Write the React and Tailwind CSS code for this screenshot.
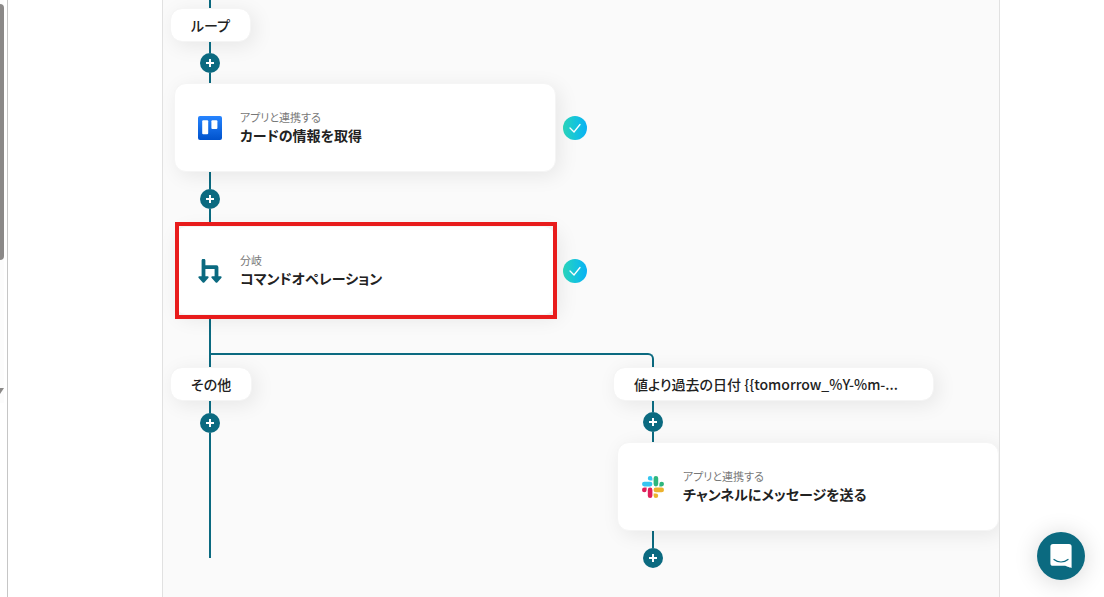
import React from 'react';

const TrelloIcon = () => (
  <svg className="h-6 w-6" viewBox="0 0 24 24" aria-hidden="true">
    <defs>
      <linearGradient id="trello" x1="0" y1="0" x2="0" y2="1">
        <stop offset="0" stopColor="#2684ff" />
        <stop offset="1" stopColor="#0052cc" />
      </linearGradient>
    </defs>
    <rect width="24" height="24" rx="2" fill="url(#trello)" />
    <rect x="4.2" y="4.3" width="6" height="14" rx="1" fill="#fff" />
    <rect x="13.4" y="4.3" width="6" height="8.6" rx="1" fill="#fff" />
  </svg>
);

const BranchIcon = () => (
  <svg className="h-6 w-6" viewBox="0 0 24 24" aria-hidden="true">
    <path
      d="M5.5 1.600v18M5.5 8.200h13V19"
      fill="none"
      stroke="#0b6a80"
      strokeWidth="3.8"
      strokeLinecap="round"
      strokeLinejoin="round"
    />
    <path
      d="M1.4 17.3h8.2c1 0 1.4 1 .7 1.7l-4 4.4c-.5.5-1.1.5-1.6 0L.7 19c-.7-.7-.3-1.7.7-1.7zM14.4 17.3h8.2c1 0 1.4 1 .7 1.7l-4 4.4c-.5.5-1.1.5-1.6 0l-4-4.4c-.7-.7-.3-1.7.7-1.7z"
      fill="#0b6a80"
    />
  </svg>
);

const SlackIcon = () => (
  <svg className="h-[22px] w-[22px]" viewBox="0 0 24 24" aria-hidden="true">
    <path
      fill="#e01e5a"
      d="M5.042 15.165a2.528 2.528 0 0 1-2.52 2.523A2.528 2.528 0 0 1 0 15.165a2.527 2.527 0 0 1 2.522-2.52h2.52v2.52zM6.313 15.165a2.527 2.527 0 0 1 2.521-2.52 2.527 2.527 0 0 1 2.521 2.52v6.313A2.528 2.528 0 0 1 8.834 24a2.528 2.528 0 0 1-2.521-2.522v-6.313z"
    />
    <path
      fill="#36c5f0"
      d="M8.834 5.042a2.528 2.528 0 0 1-2.521-2.52A2.528 2.528 0 0 1 8.834 0a2.528 2.528 0 0 1 2.521 2.522v2.52H8.834zM8.834 6.313a2.528 2.528 0 0 1 2.521 2.521 2.528 2.528 0 0 1-2.521 2.521H2.522A2.528 2.528 0 0 1 0 8.834a2.528 2.528 0 0 1 2.522-2.521h6.312z"
    />
    <path
      fill="#2eb67d"
      d="M18.956 8.834a2.528 2.528 0 0 1 2.522-2.521A2.528 2.528 0 0 1 24 8.834a2.528 2.528 0 0 1-2.522 2.521h-2.522V8.834zM17.688 8.834a2.528 2.528 0 0 1-2.523 2.521 2.527 2.527 0 0 1-2.52-2.521V2.522A2.527 2.527 0 0 1 15.165 0a2.528 2.528 0 0 1 2.523 2.522v6.312z"
    />
    <path
      fill="#ecb22e"
      d="M15.165 18.956a2.528 2.528 0 0 1 2.523 2.522A2.528 2.528 0 0 1 15.165 24a2.527 2.527 0 0 1-2.52-2.522v-2.522h2.52zM15.165 17.688a2.527 2.527 0 0 1-2.52-2.523 2.526 2.526 0 0 1 2.52-2.52h6.313A2.527 2.527 0 0 1 24 15.165a2.528 2.528 0 0 1-2.522 2.523h-6.313z"
    />
  </svg>
);

// Vertical line between two steps
const Line = ({ className }) => (
  <div className="flex w-20 justify-center">
    <div className={`w-0.5 bg-[#0b6a80] ${className}`}></div>
  </div>
);

const AddButton = () => (
  <div className="flex w-20 justify-center">
    <button
      type="button"
      aria-label="追加"
      className="flex h-5 w-5 items-center justify-center rounded-full bg-[#0b6a80]"
    >
      <svg className="h-2 w-2" viewBox="0 0 8 8" aria-hidden="true">
        <path d="M4 0v8M0 4h8" stroke="#fff" strokeWidth="2" />
      </svg>
    </button>
  </div>
);

const Pill = ({ className = '', children }) => (
  <div
    className={`h-[34px] rounded-xl border border-[#f5f5f5] bg-white bg-clip-padding px-5 text-sm leading-8 font-medium whitespace-nowrap shadow-[4px_4px_20px_rgba(0,0,0,0.08)] ${className}`}
  >
    {children}
  </div>
);

const CheckBadge = () => (
  <div className="flex h-6 w-6 items-center justify-center rounded-full bg-linear-to-r from-[#2cd9bd] to-[#0bb0f4]">
    <svg className="h-3 w-3" viewBox="0 0 12 12" aria-hidden="true">
      <path d="M1 6l4 4 6-7.500" fill="none" stroke="#fff" strokeWidth="1.3" strokeLinecap="round" />
    </svg>
  </div>
);

const StepCard = ({ icon, label, title, checked, highlighted }) => (
  <div className="ml-1 flex items-center gap-[7px]">
    <div className="relative">
      <button
        type="button"
        className="flex h-[89px] w-[382px] items-center gap-4 rounded-xl border border-[#f5f5f5] bg-white px-[21px] text-left shadow-[4px_4px_20px_rgba(0,0,0,0.08)]"
      >
        <span className="flex w-7 justify-center">{icon}</span>
        <span className="flex flex-col pb-0.5">
          <span className="text-[11px] leading-4 text-[#777]">{label}</span>
          <span className="text-sm leading-5 font-bold">{title}</span>
        </span>
      </button>
      {highlighted && (
        <div className="pointer-events-none absolute -top-1 -right-px -bottom-1 left-px border-4 border-[#e81c1c]"></div>
      )}
    </div>
    {checked && <CheckBadge />}
  </div>
);

const App = () => {
  return (
    <div className="flex min-h-screen bg-white font-['Noto_Sans_CJK_JP',sans-serif] text-[#222] [font-feature-settings:'palt']">
      {/* Side panel edge with its scrollbar */}
      <aside className="flex w-2 shrink-0 flex-col border-r border-[#c6c6c6]">
        <div className="flex h-[403px] w-1 flex-col justify-between bg-[#fcfcfc] pt-1 pb-2">
          <div className="h-64 rounded-r bg-[#8b8988]"></div>
          <svg className="h-2 w-1" viewBox="0 0 4 8" aria-hidden="true">
            <path d="M0 1h4L0 7z" fill="#8b8988" />
          </svg>
        </div>
      </aside>

      <main className="flex flex-1 pr-[104px] pl-[154px]">
        <div className="flex flex-1 flex-col items-start overflow-hidden border-x border-[#e1e1e1] bg-[#fafafa] pl-[7px]">
          <Line className="h-2" />
          <Pill>ループ</Pill>
          <Line className="h-[11px]" />
          <AddButton />
          <Line className="h-[10px]" />
          <StepCard icon={<TrelloIcon />} label="アプリと連携する" title="カードの情報を取得" checked />
          <Line className="h-[17px]" />
          <AddButton />
          <Line className="h-[17px]" />
          <StepCard icon={<BranchIcon />} label="分岐" title="コマンドオペレーション" checked highlighted />
          <Line className="h-[38px]" />

          {/* Branches */}
          <div className="flex items-start">
            <div className="flex w-[443px] flex-col items-start">
              <div className="flex w-full pl-[39px]">
                <div className="h-[14px] flex-1 border-t-2 border-l-2 border-[#0b6a80]"></div>
              </div>
              <Pill>その他</Pill>
              <Line className="h-3" />
              <AddButton />
              <Line className="h-[125px]" />
            </div>

            <div className="flex flex-col items-start">
              <div className="h-[14px] w-[41px] rounded-tr-md border-t-2 border-r-2 border-[#0b6a80]"></div>
              <Pill className="w-[321px]">{'値より過去の日付 {{tomorrow_%Y-%m-...'}</Pill>
              <Line className="h-[11px]" />
              <AddButton />
              <Line className="h-[10px]" />
              <StepCard icon={<SlackIcon />} label="アプリと連携する" title="チャンネルにメッセージを送る" />
              <Line className="h-[17px]" />
              <AddButton />
            </div>
          </div>
        </div>
      </main>

      <button
        type="button"
        aria-label="チャット"
        className="fixed right-[19px] bottom-[17px] flex h-12 w-12 items-center justify-center rounded-full bg-[#0b6a80] shadow-[0_2px_24px_rgba(0,0,0,0.16)]"
      >
        <svg className="h-6 w-[22px]" viewBox="0 0 22 24" aria-hidden="true">
          <path d="M3 0h16a2.6 2.6 0 0 1 2.6 2.6V24s-3-.7-6.4-2.2H3A2.6 2.6 0 0 1 .4 19.2V2.6A2.6 2.6 0 0 1 3 0z" fill="#fff" />
          <path d="M4 15.5c4 3.3 10 3.3 14 0" fill="none" stroke="#0b6a80" strokeWidth="1.2" strokeLinecap="round" />
        </svg>
      </button>
    </div>
  );
};

export default App;
